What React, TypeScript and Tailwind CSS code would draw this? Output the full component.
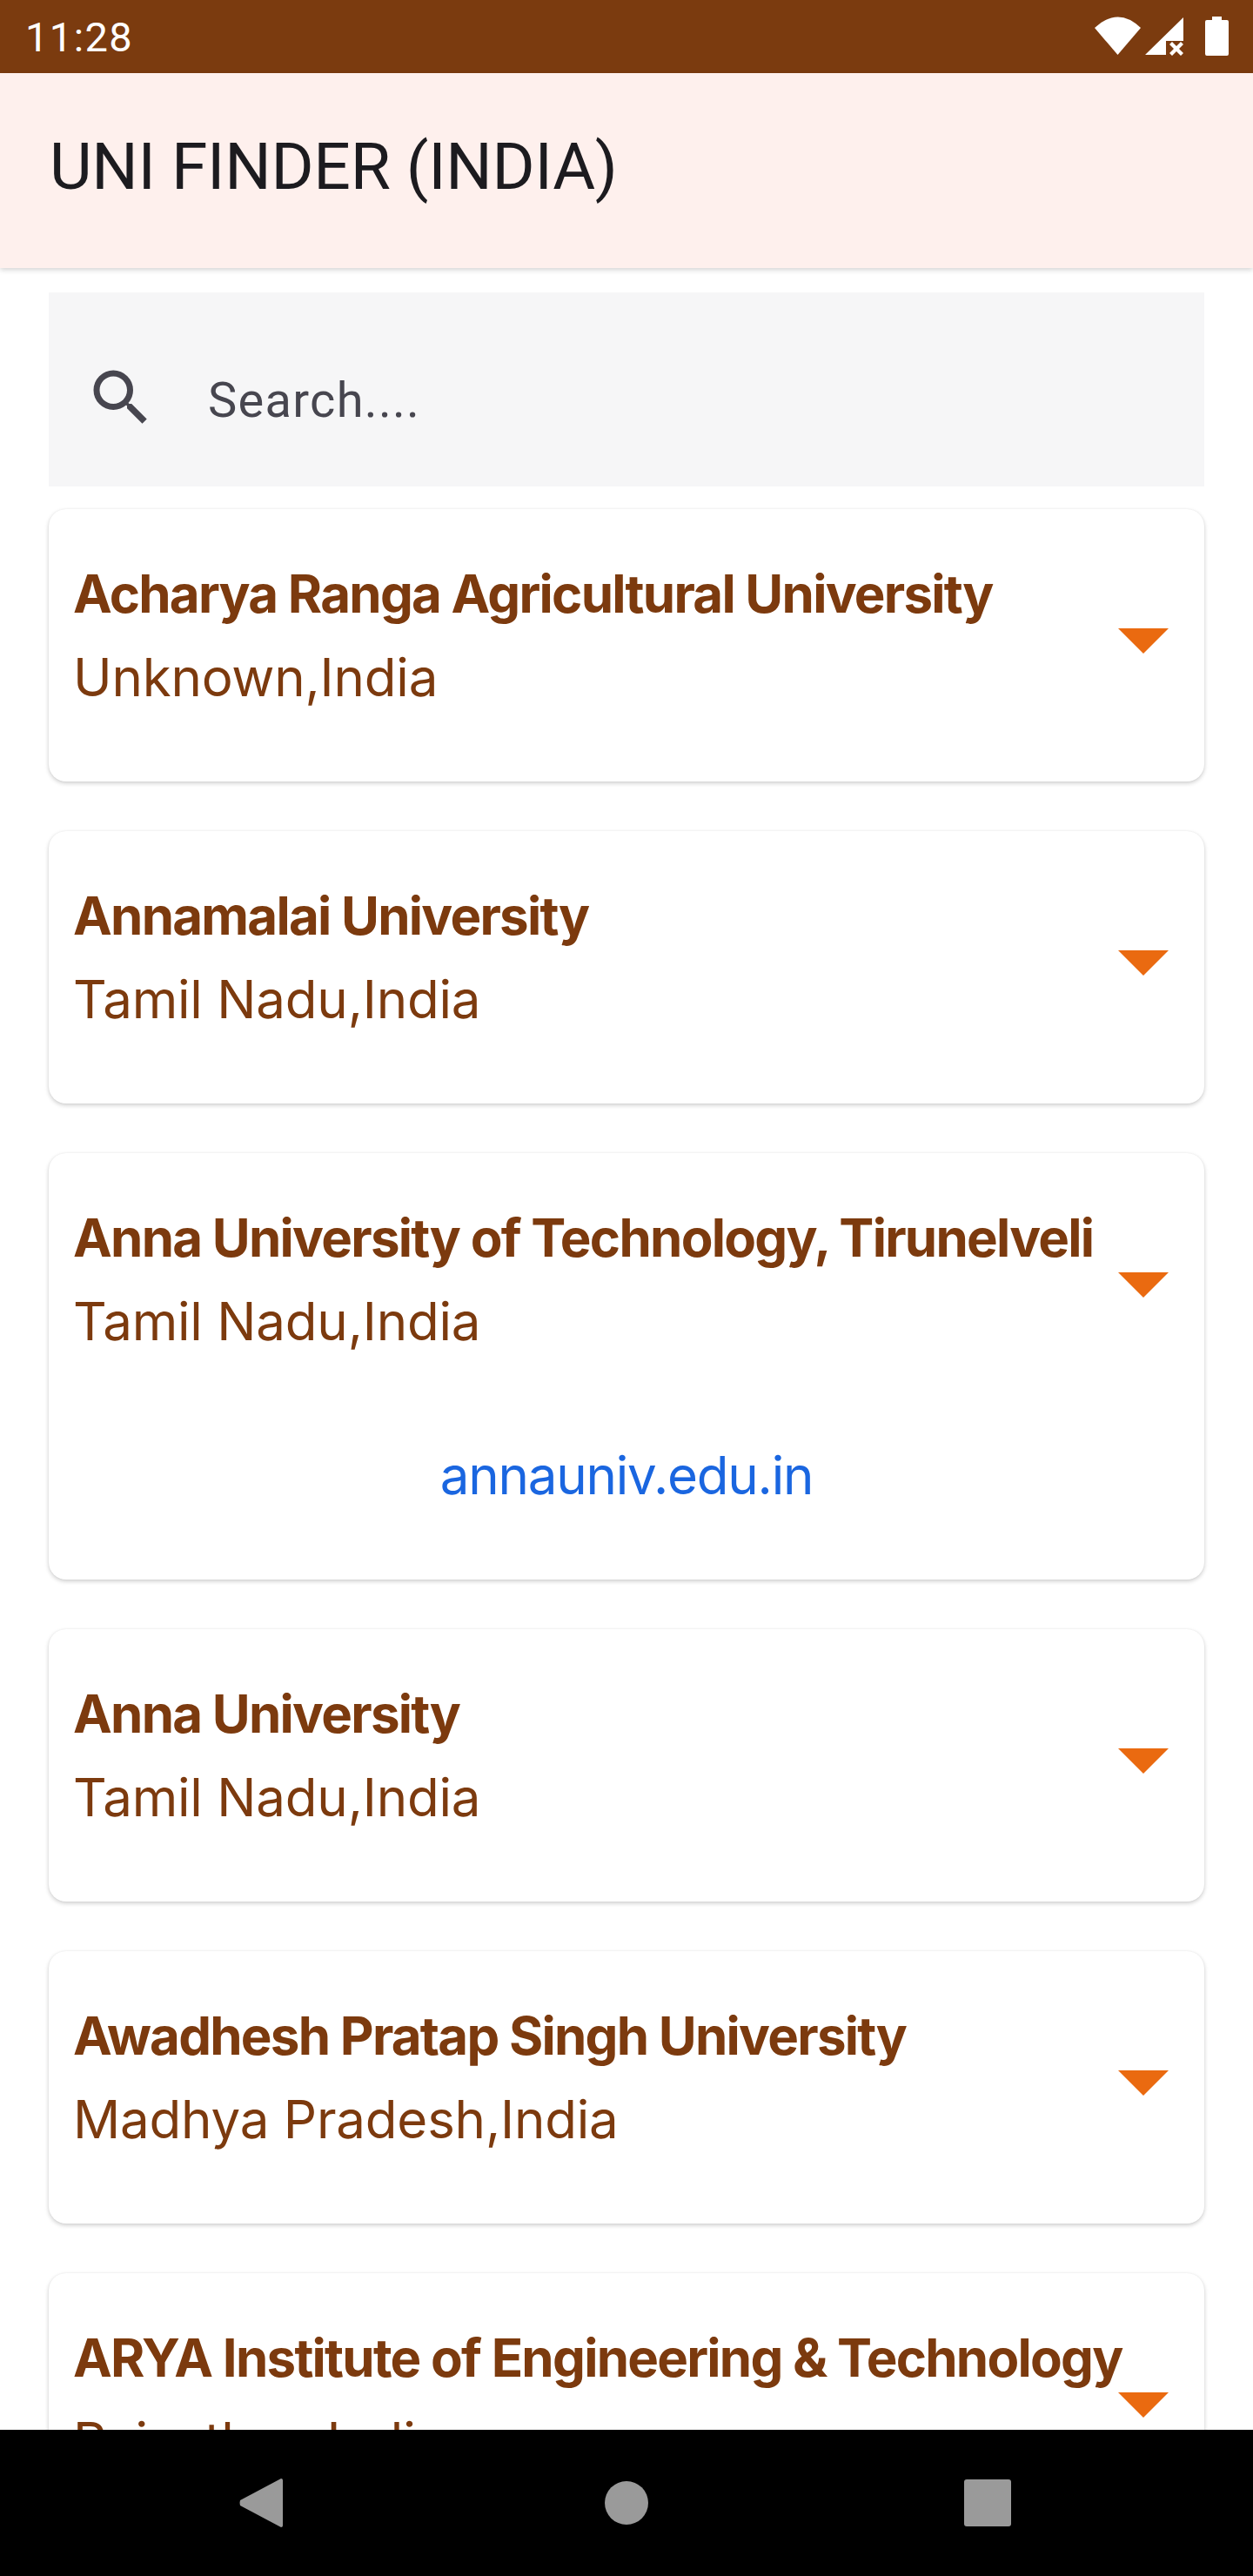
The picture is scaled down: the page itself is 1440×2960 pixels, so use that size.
import React from "react";

const unis = [
  { name: "Acharya Ranga Agricultural University", place: "Unknown,India" },
  { name: "Annamalai University", place: "Tamil Nadu,India" },
  { name: "Anna University of Technology, Tirunelveli", place: "Tamil Nadu,India", link: "annauniv.edu.in" },
  { name: "Anna University", place: "Tamil Nadu,India" },
  { name: "Awadhesh Pratap Singh University", place: "Madhya Pradesh,India" },
  { name: "ARYA Institute of Engineering & Technology", place: "Rajasthan,India" },
];

function Card({ name, place, link }: { name: string; place: string; link?: string }) {
  return (
    <div className="mb-[57px] bg-white rounded-[20px] shadow-[0_2px_5px_rgba(0,0,0,0.2),0_0_2px_rgba(0,0,0,0.05)] shrink-0">
      <div className="relative h-[313px] pl-[28px] pt-[50px]">
        <div className="text-[#7c3a0e] text-[60px] leading-[95px] tracking-[-1.75px] font-bold font-['Inter',sans-serif] whitespace-nowrap">{name}</div>
        <div className="text-[#7c3a0e] text-[60px] leading-[96px] tracking-[-0.2px] font-['Inter',sans-serif]">{place}</div>
        <div className="absolute right-[41px] top-[137px] w-0 h-0 border-l-[29px] border-r-[29px] border-t-[29px] border-l-transparent border-r-transparent border-t-[#ea6a10]" />
      </div>
      {link && (
        <div className="text-center text-[#1a66e0] text-[60px] leading-[60px] tracking-[-1.2px] mt-[27px] pb-[90px] font-['Inter',sans-serif]">{link}</div>
      )}
    </div>
  );
}

export default function App() {
  return (
    <div className="w-[1440px] h-[2960px] flex flex-col overflow-hidden bg-white font-['Roboto',sans-serif]">
      <div className="h-[84px] bg-[#7b3b0f] flex items-center justify-between pl-[29px] pr-[24px] shrink-0">
        <span className="text-white text-[47px] leading-none tracking-[1.4px]">11:28</span>
        <svg width="160" height="48" viewBox="0 0 160 48" fill="#fff">
          <path d="M2 14 Q 29 -11 55 14 L 28.5 45 Z" />
          <path d="M60 45 L104 2 V29 H84 V45 Z" />
          <path d="M88 33 L91 30 L96 35 L101 30 L104 33 L99 38 L104 43 L101 46 L96 41 L91 46 L88 43 L93 38 Z" />
          <path d="M137 1 H148 V5 H154 Q156 5 156 7 V44 Q156 46 154 46 H131 Q129 46 129 44 V7 Q129 5 131 5 H137 Z" />
        </svg>
      </div>
      <div className="h-[224px] bg-[#fef0ed] flex items-start pl-[57px] pt-[64px] shrink-0 shadow-[0_2px_6px_rgba(0,0,0,0.18)] relative z-10">
        <span className="text-[#1c1b1f] text-[75px] leading-[86px] tracking-[-0.3px]">UNI FINDER (INDIA)</span>
      </div>
      <div className="flex-1 min-h-0 overflow-hidden px-[56px] pt-[28px]">
        <div className="h-[223px] bg-[#f6f6f7] flex items-center mb-[26px]">
          <svg className="ml-[41px] mt-[18px]" width="84" height="84" viewBox="0 0 24 24" fill="#47464f">
            <path d="M15.5 14h-.79l-.28-.27A6.47 6.47 0 0 0 16 9.5 6.5 6.5 0 1 0 9.5 16c1.61 0 3.09-.59 4.23-1.57l.27.28v.79l5 4.99L20.49 19l-4.99-5zm-6 0C7.01 14 5 11.99 5 9.5S7.01 5 9.5 5 14 7.01 14 9.5 11.99 14 9.5 14z" />
          </svg>
          <span className="ml-[58px] mt-[25px] text-[#47464f] text-[56px] leading-none tracking-[1.3px]">Search....</span>
        </div>
        {unis.map((u) => (
          <Card key={u.name} {...u} />
        ))}
      </div>
      <div className="h-[168px] bg-black flex items-center shrink-0 relative">
        <svg className="absolute left-[275px] top-[56px]" width="50" height="56" viewBox="0 0 50 56" fill="#9a9a9a"><path d="M48 0 Q50 0 50 2 V54 Q50 56 48 56 L1 31 Q0 28 1 25 Z" /></svg>
        <div className="absolute left-[695px] top-[59px] w-[50px] h-[50px] rounded-full bg-[#9a9a9a]" />
        <div className="absolute left-[1108px] top-[57px] w-[54px] h-[54px] rounded-[3px] bg-[#9a9a9a]" />
      </div>
    </div>
  );
}
